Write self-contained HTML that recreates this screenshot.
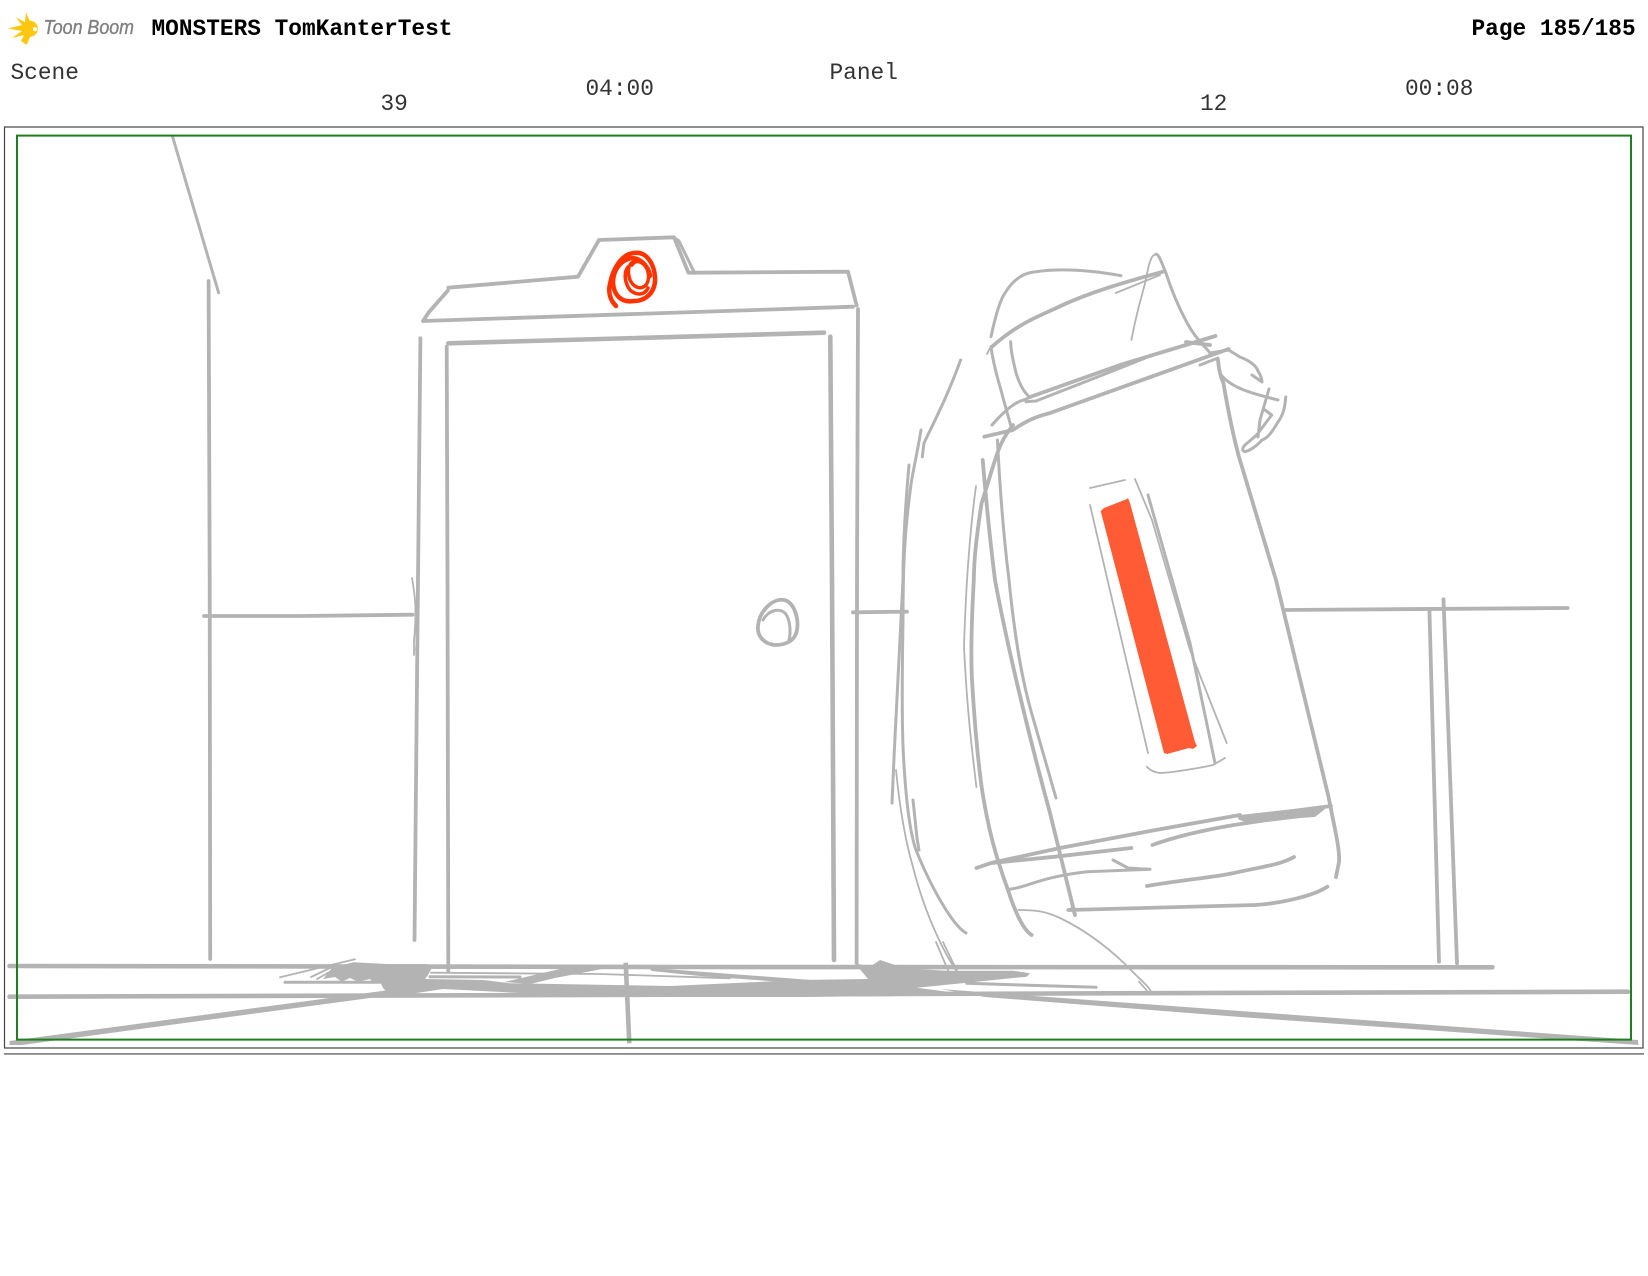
<!DOCTYPE html>
<html lang="en">
<head>
<meta charset="utf-8">
<title>MONSTERS TomKanterTest - Page 185/185</title>
<style>
html,body{margin:0;padding:0;background:#fff;width:1648px;height:1276px;overflow:hidden}
svg{display:block;position:absolute;left:0;top:0}
.t{font-family:"Liberation Mono",monospace;font-size:22.8px;fill:#333}
.b{font-weight:bold;fill:#000}
.g{fill:none;stroke:#b3b3b3;stroke-linecap:round;stroke-linejoin:round}
.w1{stroke-width:1.8}.w2{stroke-width:3}.w3{stroke-width:3.8}.w4{stroke-width:4.6}
</style>
</head>
<body>
<svg width="1648" height="1276" viewBox="0 0 1648 1276" xmlns="http://www.w3.org/2000/svg">
<!-- logo -->
<path fill="#fdc70f" d="M37.7,27 Q36,21 29.5,20.5 L26,12.5 L25,22 L16,17.5 L22,25 L8,28.5 L22,31 L12,38 L24,35 L21,41 L26.7,45 L30,37 Q36,36 37.7,31 Z"/>
<circle cx="35" cy="29.3" r="2" fill="#fff"/>
<text x="43.5" y="34" font-family="'Liberation Sans',sans-serif" font-style="italic" font-size="20" fill="#7f7f7f" stroke="#7f7f7f" stroke-width="0.35" textLength="90.5" lengthAdjust="spacingAndGlyphs">Toon Boom</text>
<!-- header text -->
<text class="t b" x="151.5" y="35">MONSTERS TomKanterTest</text>
<text class="t b" x="1471.5" y="35">Page 185/185</text>
<text class="t" x="10.5" y="79">Scene</text>
<text class="t" x="380.5" y="110">39</text>
<text class="t" x="585.5" y="95">04:00</text>
<text class="t" x="829.5" y="79">Panel</text>
<text class="t" x="1200" y="110">12</text>
<text class="t" x="1405" y="95">00:08</text>
<!-- outer frame -->
<rect x="4.5" y="127" width="1638.5" height="921" fill="#fff" stroke="#444" stroke-width="1.2"/>
<rect x="4" y="1053" width="1640" height="1.8" fill="#888"/>

<!-- wall and door -->
<g class="g">
<path class="w2" d="M172.4,136 L218.6,292.7"/>
<path class="w3" d="M208.6,281 L209.7,580 L210.2,959"/>
<path class="w3" d="M448.3,287.7 L578,276.7 L599,240 L674,237.3 L688.4,272.7 L694,272.7 L848,271.7 L856.6,305.3"/>
<path class="w2" d="M675,238.3 L679,241 L694.7,273.3"/>
<path class="w3" d="M447.7,290.7 L429,312 L423,321 L824,307.7 L853,306.7"/>
<path class="w4" d="M448.3,343.3 L824,332.7"/>
<path class="w3" d="M420.4,338.3 L418,580 L417,680 L414.5,940"/>
<path class="w3" d="M446.7,346.7 L447.5,580 L448.3,971.7"/>
<path class="w4" d="M830.3,336.7 L832,580 L834,960"/>
<path class="w3" d="M858,309 L857,580 L856.6,963"/>
<path class="w3" d="M204,616 L300,616 L412.5,614.7"/>
<path class="w1" d="M412,578 C415,595 417,610 414,640 L414,655 M417,578 C419,600 418,630 416,650"/>
<path class="w3" d="M853,612.3 L907,611.7"/>
<!-- knob -->
<path class="w3" d="M784,600 C794,602 799,618 797,630 C795,642 784,645 775,645 C763,644 757,635 758,626 C759,612 772,598 784,600 Z"/>
<path class="w2" d="M763,620 C768,610 782,606 787,616 C790,622 791,632 789,640"/>
<!-- right wall -->
<path class="w3" d="M1284,610 L1567.6,608"/>
<path class="w3" d="M1429.4,610 L1439,961.7"/>
<path class="w3" d="M1443.5,599.3 L1457,963.3"/>
</g>

<!-- figure -->
<g class="g">
<path class="w2" d="M991,336.7 C995,318 1000,300 1005,293 C1014,278 1025,273 1034,272 C1060,268 1090,270 1121,275.7"/>
<path class="w3" d="M992,346.7 C1020,322 1040,316 1060.5,306 C1095,290 1140,278 1163,271.7"/>
<path class="w1" d="M1115.7,293 L1160,275"/>
<path class="w1" d="M1131.4,340 C1136,315 1140,302 1144.6,285 C1148,270 1150,254 1156,254.3"/>
<path class="w2" d="M1156,254.3 C1159,254 1162,264 1165.6,272 C1172,292 1178,306 1186.6,322 C1195,338 1203,344 1210,353"/>
<path class="w2" d="M1026,401.7 L1036,401 L1100,376 L1144.6,358.3"/>
<path class="w3" d="M1030,397 L1120,365 L1215.5,336 M1186,342 L1210,345"/>
<path class="w2" d="M1200,365 L1218,358"/>
<path class="w2" d="M1010.6,341.7 C1011,352 1013,360 1015.8,372 C1019,383 1024,392 1029,396.7"/>
<path class="w2" d="M991,346.7 C994,370 1000,385 1002.7,396.7 L1012,430"/>
<path class="w1" d="M987,354 L991,346"/>
<path class="w2" d="M992,425 C1005,410 1015,402 1023.7,400 L1031.6,396.7"/>
<path class="w3" d="M984.3,436.7 L1013,430 C1030,418 1040,416 1050,413 L1228.6,349"/>
<path class="w3" d="M1013,425 C1005,435 1000,445 997.4,453 C990,475 986,490 981.6,503 C976,540 974,560 973.8,580 C971,630 971,660 972,680 C975,730 978,760 981.6,786.7 C988,830 997,860 1008,890 C1016,915 1024,930 1031.6,935"/>
<path class="w3" d="M982.7,460 C986,500 990,540 995,580 C1008,650 1030,740 1050,813 L1075,915"/>
<path class="w2" d="M997.4,440 C1000,490 1004,540 1009,580 C1015,640 1022,680 1031.6,713 L1056,798"/>
<path class="w2" d="M960.6,360 C948,395 935,420 924,443 L922.3,456.7"/>
<path class="w2" d="M909,465 C905,510 903,550 903,580 C899,660 895,730 892,803"/>
<path class="w2" d="M921,430 C916,460 912,475 910.7,486.7 C905,530 903,560 903,620 C902,680 902,720 903,746 C905,790 909,830 916,850 C930,885 952,925 966,933"/>
<path class="w1" d="M896,770 C900,810 905,840 913,867 C925,915 945,955 958,973"/>
<path class="w2" d="M913,800 L917,838 L919,850"/>
<path class="w1" d="M976,486 C970,530 966,580 964,647 C967,710 972,750 976.4,787"/>
<path class="w3" d="M1218,360 C1219,372 1221,378 1223.4,383 C1228,410 1233,435 1239,457 L1276,580 L1328.5,796.7 C1335,830 1340,850 1339,862 L1336,877"/>
<!-- hand -->
<path class="w2" d="M1210,353 L1228.6,350 L1240,357 C1248,360 1256,365 1258,371 C1261,376 1262,380 1262,382 L1252,375"/>
<path class="w2" d="M1221,375 C1232,388 1250,393 1278,400"/>
<path class="w2" d="M1269,389 L1260,420 L1258,437"/>
<path class="w2" d="M1285.7,397 C1285,408 1283,415 1278,422 C1272,432 1268,438 1262,440 C1255,448 1248,451 1245,451.7 C1242,451 1242,448 1245,445 L1256.7,435 L1271.7,415 L1265,410"/>
<!-- belt -->
<path class="w3" d="M976.4,868 L992,862.7 L1060,848 L1150,831 L1240,815"/>
<path d="M1240,815 L1330,805 L1315,817 L1300,818 L1250,824 L1240,820 Z" fill="#b3b3b3" stroke="none"/>
<path class="w3" d="M1240,818 L1331,806"/>
<path class="w3" d="M1152.4,845 C1180,835 1210,829 1234,825 L1313,813"/>
<path class="w3" d="M992,863 L1055,856.7 L1131.4,848"/>
<path class="w2" d="M1010.6,889 C1025,888 1040,877 1087,871.7 L1150,869.3 L1128,868 L1113,860"/>
<path class="w3" d="M1147,886 C1180,880 1210,878 1234,873 C1260,867 1280,865 1294,857"/>
<path class="w3" d="M1068.4,910 L1255,905 C1285,903 1315,895 1327.4,886.7"/>
<path class="w2" d="M1075,915 L1072,908"/>
<path class="w1" d="M1018.4,910 C1035,910 1045,911 1060,918 C1085,930 1105,945 1125,964 C1140,980 1148,985 1151,991.7"/>
<path class="w1" d="M1139,981.7 L1147,990.7"/>
</g>

<!-- tube -->
<path fill="#ff5c36" d="M1100.7,511 L1104,508 L1127,499 L1128,498 L1130,503 L1195,742 L1197,746 L1193,749 L1189,748 L1167,754 L1164,753 L1101.7,515 Z"/>
<g class="g">
<path class="w1" d="M1090,488 L1125,480"/>
<path class="w1" d="M1135,479 L1152,520 L1190,650 L1226.7,743"/>
<path class="w2" d="M1148,495 L1190,643 L1215,763"/>
<path class="w1" d="M1090,505 L1148,753"/>
<path class="w1" d="M1146.7,766.7 C1150,770 1155,773 1162,773 C1175,772 1200,768 1213,765 L1225,758"/>
</g>

<!-- red spiral -->
<g fill="none" stroke="#ff3300" stroke-linecap="round" stroke-linejoin="round">
<path stroke-width="4.5" d="M616,306 C610,300 608,292 610,284 C613,268 622,254 634,253 C646,251 654,263 655,277 C656,292 646,301 634,301 C622,303 614,296 613,283 C613,270 620,262 628,259 C638,255 649,266 650,276"/>
<path stroke-width="3.5" d="M628,267 C624,272 624,282 630,290 C637,296 645,295 648,288 M635,261 C628,263 627,272 630,280 C634,288 641,290 646,285 C651,278 648,266 642,263 C637,260 634,262 632,265"/>
</g>

<!-- floor -->
<g class="g">
<path class="w4" d="M9.5,966 L700,967 L1492.4,967.3"/>
<path class="w4" d="M9.5,996.7 L900,994 L1628,991.7"/>
<path class="w4" d="M625.7,962.7 L629.3,1043.3" style="stroke-linecap:butt"/>
<path class="w1" d="M280,977.3 L355,959.3"/>
<path class="w2" d="M285,982.3 L380,982.3"/>
<path class="w1" d="M311,977 L330,968 M317,979 L333,970"/>
<path class="w1" d="M431,972.7 L600,974 L730,978.3"/>
<path class="w2" d="M430,976.7 L520,977"/>
<path class="w2" d="M966.7,983.3 L1096,987.3"/>
<path class="w1" d="M943,942 L958,973 M936,942 L950,975"/>
</g>
<g fill="#b3b3b3">
<path d="M9.5,1041 L389,990 L392,995 L22,1045 L9.5,1045 Z"/>
<path d="M940,989 L1240,1011 L1638,1040 L1638.5,1045 L1240,1017 L985,997 Z"/>
<path d="M504,982 L560,969 L601.7,965.5 L602,969 L555,978 L530,984 Z"/>
<path d="M646,966 L665,969 L825,981 L825,985 L700,976 L652,971 Z"/>
<path d="M331.7,968.3 L353.3,962.3 L386.7,964 L426.7,964 L431.7,968.3 L428,975 L425,979 L483.3,980 L510,983.3 L670,986 L800,980 L868,979 L855,963.3 L870,966.7 L880,960 L900,966.7 L920,969.3 L946.7,970.7 L1013,970.7 L1030,973.3 L1026.7,976.7 L966.7,982.7 L916.7,987.7 L973,995 L800,997 L520,997 L520,993 L443,989 L416.7,993 L413,994 L396.7,995.7 L386.7,991.7 L382,983 L373,983 L370,979 L358,981.7 L350,978 L341.7,981.7 L335,977 L323,979 Z"/>
<ellipse cx="403" cy="982" rx="22" ry="14"/>
</g>

<!-- green frame -->
<rect x="17" y="135.6" width="1614" height="904" fill="none" stroke="#1f7f1f" stroke-width="2"/>
</svg>
</body>
</html>
